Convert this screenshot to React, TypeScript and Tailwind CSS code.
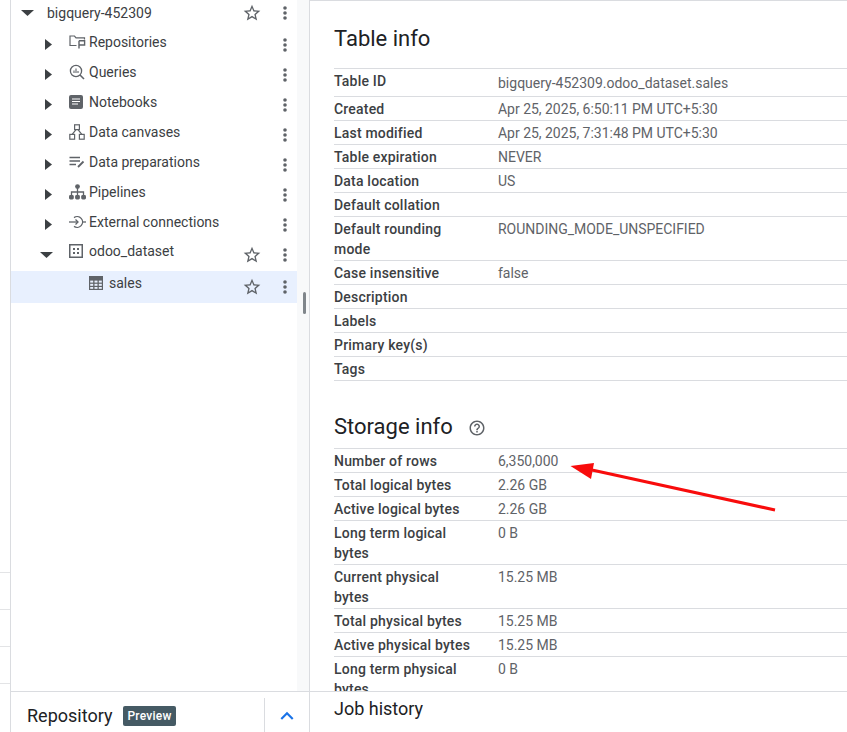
import React from "react";
import { MdStarBorder, MdOutlineHelpOutline, MdKeyboardArrowUp } from "react-icons/md";

const ink = "#5f6368";

const Star = () => <MdStarBorder size={20} color={ink} />;
const Kebab = () => (
  <svg width="4" height="14" viewBox="0 0 4 14" fill={ink}>
    <circle cx="2" cy="2" r="1.8" />
    <circle cx="2" cy="7" r="1.8" />
    <circle cx="2" cy="12" r="1.8" />
  </svg>
);
const CaretRight = () => (
  <svg width="7" height="11" viewBox="0 0 7 11" fill="#3c4043"><path d="M0 0 L7 5.5 L0 11 Z" /></svg>
);
const CaretDown = () => (
  <svg width="13" height="6" viewBox="0 0 13 6" fill="#3c4043"><path d="M0 0 H13 L6.5 6 Z" /></svg>
);

const RepoIcon = () => (
  <svg width="17" height="14" viewBox="0 0 17 14" fill="none" stroke={ink} strokeWidth="1.2">
    <path d="M7.5 10.5 H1 V1 H5.5 L7 2.8 H15.5 V4.5" />
    <path d="M10 5.8 V13.5 M10 5.8 H15.6 V10 H10" strokeWidth="1.4" />
  </svg>
);
const QueryIcon = () => (
  <svg width="16" height="16" viewBox="0 0 16 16" fill="none" stroke={ink} strokeWidth="1.3">
    <circle cx="7" cy="7" r="5.6" />
    <path d="M11 11 L15 15" strokeWidth="1.6" />
    <path d="M5 6.5 V9 M7 4.5 V9 M9 7 V9" strokeWidth="1.1" />
  </svg>
);
const NotebookIcon = () => (
  <svg width="14" height="14" viewBox="0 0 14 14">
    <rect width="14" height="14" rx="2" fill={ink} />
    <path d="M3 4 H11 M3 6.5 H11 M3 9 H9" stroke="#fff" strokeWidth="1.1" />
  </svg>
);
const CanvasIcon = () => (
  <svg width="16" height="16" viewBox="0 0 16 16" fill="none" stroke={ink} strokeWidth="1.2">
    <rect x="5.6" y="0.8" width="4.8" height="4.8" />
    <rect x="0.8" y="10.4" width="4.8" height="4.8" />
    <rect x="10.4" y="10.4" width="4.8" height="4.8" />
    <path d="M7 5.6 L3.2 10.4 M9 5.6 L12.8 10.4" />
  </svg>
);
const PrepIcon = () => (
  <svg width="16" height="12" viewBox="0 0 16 12" fill="none" stroke={ink} strokeWidth="1.3">
    <path d="M0.5 1.5 H11 M0.5 5 H11 M0.5 8.5 H7" />
    <path d="M9 11 L14.5 5.5" strokeWidth="1.8" />
  </svg>
);
const PipelineIcon = () => (
  <svg width="17" height="16" viewBox="0 0 17 16" fill={ink}>
    <circle cx="8.5" cy="2.6" r="2.4" />
    <path d="M8.5 4 V11 M2.5 11 V8 H14.5 V11" fill="none" stroke={ink} strokeWidth="1.3" />
    <rect x="0" y="11" width="4.8" height="4.4" rx="1.4" />
    <rect x="6.1" y="11" width="4.8" height="4.4" rx="1.4" />
    <rect x="12.2" y="11" width="4.8" height="4.4" rx="1.4" />
  </svg>
);
const ExternalIcon = () => (
  <svg width="17" height="14" viewBox="0 0 17 14" fill="none" stroke={ink} strokeWidth="1.3">
    <path d="M0 7 H9" />
    <path d="M6.5 4.5 L9 7 L6.5 9.5" />
    <path d="M5 2.6 A5.4 5.4 0 1 1 5 11.4" />
    <path d="M13.5 7 H17" />
  </svg>
);
const DatasetIcon = () => (
  <svg width="14" height="14" viewBox="0 0 14 14" fill="none" stroke={ink} strokeWidth="1.5">
    <rect x="0.75" y="0.75" width="12.5" height="12.5" />
    <g fill={ink} stroke="none">
      <rect x="4" y="4" width="2" height="2" />
      <rect x="8" y="4" width="2" height="2" />
      <rect x="4" y="8" width="2" height="2" />
      <rect x="8" y="8" width="2" height="2" />
    </g>
  </svg>
);
const TableIcon = () => (
  <svg width="14" height="14" viewBox="0 0 14 14">
    <rect width="14" height="14" fill={ink} />
    <g fill="#e8f0fe">
      <rect x="1.2" y="4.6" width="3" height="2" />
      <rect x="5.5" y="4.6" width="3" height="2" />
      <rect x="9.8" y="4.6" width="3" height="2" />
      <rect x="1.2" y="7.8" width="3" height="2" />
      <rect x="5.5" y="7.8" width="3" height="2" />
      <rect x="9.8" y="7.8" width="3" height="2" />
      <rect x="1.2" y="11" width="3" height="1.8" />
      <rect x="5.5" y="11" width="3" height="1.8" />
      <rect x="9.8" y="11" width="3" height="1.8" />
    </g>
  </svg>
);

const sections: [string, React.ReactNode][] = [
  ["Repositories", <RepoIcon />],
  ["Queries", <QueryIcon />],
  ["Notebooks", <NotebookIcon />],
  ["Data canvases", <CanvasIcon />],
  ["Data preparations", <PrepIcon />],
  ["Pipelines", <PipelineIcon />],
  ["External connections", <ExternalIcon />],
];

const tableInfo: [string, string][] = [
  ["Created", "Apr 25, 2025, 6:50:11 PM UTC+5:30"],
  ["Last modified", "Apr 25, 2025, 7:31:48 PM UTC+5:30"],
  ["Table expiration", "NEVER"],
  ["Data location", "US"],
  ["Default collation", ""],
  ["Default rounding mode", "ROUNDING_MODE_UNSPECIFIED"],
  ["Case insensitive", "false"],
  ["Description", ""],
  ["Labels", ""],
  ["Primary key(s)", ""],
  ["Tags", ""],
];

const storageInfo: [string, string][] = [
  ["Number of rows", "6,350,000"],
  ["Total logical bytes", "2.26 GB"],
  ["Active logical bytes", "2.26 GB"],
  ["Long term logical bytes", "0 B"],
  ["Current physical bytes", "15.25 MB"],
  ["Total physical bytes", "15.25 MB"],
  ["Active physical bytes", "15.25 MB"],
  ["Long term physical bytes", "0 B"],
];

function InfoRow({ label, value }: { label: string; value: string }) {
  return (
    <div className="flex border-b border-[#dadce0] pb-[1px] pt-[2px] leading-[20px]">
      <div className="w-[164px] shrink-0 pr-[24px] text-[14px] font-medium tracking-[0.2px] text-[#3c4043]">{label}</div>
      <div className="text-[14px] tracking-[-0.02px] text-[#5f6368]">{value}</div>
    </div>
  );
}

export default function App() {
  return (
    <div
      className="relative flex h-[732px] w-[847px] overflow-hidden bg-white text-[#3c4043]"
      style={{ fontFamily: "Roboto, sans-serif" }}
    >
      {/* page sliver */}
      <div className="w-[11px] shrink-0 border-r border-[#dadce0] pt-[572px]">
        <div className="h-[37px] border-t border-[#e3e4e6]" />
        <div className="h-[37px] border-t border-[#e3e4e6]" />
        <div className="h-[37px] border-t border-[#e3e4e6]" />
        <div className="h-[37px] border-t border-[#e3e4e6]" />
      </div>

      {/* explorer */}
      <div className="flex w-[299px] shrink-0 flex-col border-r border-[#dadce0]">
        <div className="flex min-h-0 flex-1">
          <div className="w-[286px] shrink-0 text-[14px]">
            <div className="mb-[4px] flex h-[26px] items-center">
              <div className="flex w-[36px] justify-start pl-[10px]"><CaretDown /></div>
              <span className="flex-1 text-[#3c4043]">bigquery-452309</span>
              <div className="flex w-[22px] justify-center"><Star /></div>
              <div className="ml-[20px] mr-[10px] flex w-[4px] justify-center"><Kebab /></div>
            </div>
            {sections.map(([name, icon]) => (
              <div key={name} className="flex h-[30px] items-center">
                <div className="mb-[1px] flex w-[58px] shrink-0 justify-center pl-[16px]">
                  <CaretRight />
                </div>
                <div className="mb-[6px] flex w-[20px] shrink-0 justify-start">{icon}</div>
                <span className="mb-[6px] flex-1">{name}</span>
                <div className="ml-[12px] mr-[10px] flex w-[4px] justify-center"><Kebab /></div>
              </div>
            ))}
            <div className="flex h-[30px] items-center">
              <div className="flex w-[58px] shrink-0 justify-center pl-[13px]">
                <CaretDown />
              </div>
              <div className="mb-[8px] flex w-[20px] shrink-0 justify-start"><DatasetIcon /></div>
              <span className="mb-[8px] flex-1">odoo_dataset</span>
              <div className="flex w-[22px] justify-center"><Star /></div>
              <div className="ml-[20px] mr-[10px] flex w-[4px] justify-center"><Kebab /></div>
            </div>
            <div className="mt-[1px] flex h-[32px] items-center bg-[#e8f0fe]">
              <div className="mb-[8px] ml-[78px] flex w-[20px] shrink-0 justify-start"><TableIcon /></div>
              <span className="mb-[8px] flex-1">sales</span>
              <div className="flex w-[22px] justify-center"><Star /></div>
              <div className="ml-[20px] mr-[10px] flex w-[4px] justify-center"><Kebab /></div>
            </div>
          </div>
          <div className="flex-1 bg-[#f8f9fa]" />
        </div>
        <div className="flex h-[41px] shrink-0 items-center border-t border-[#dadce0] bg-white">
          <span className="ml-[16px] mt-[6px] text-[18px] text-[#202124]">Repository</span>
          <span className="ml-[11px] mt-[7px] rounded-[2px] bg-[#455a64] px-[4px] text-[12px] font-medium leading-[20px] tracking-[0.25px] text-white">Preview</span>
          <div className="ml-auto flex h-[34px] w-[45px] items-center justify-center self-end border-l border-[#dadce0]">
            <MdKeyboardArrowUp size={26} color="#1a73e8" className="mt-[2px]" />
          </div>
        </div>
      </div>

      {/* details */}
      <div className="flex min-w-0 flex-1 flex-col border-t border-[#dadce0]">
        <div className="min-h-0 flex-1 overflow-hidden pl-[24px]">
          <h2 className="mt-[22px] text-[22px] font-normal leading-[32px] text-[#202124]">Table info</h2>
          <div className="mt-[13px] border-t border-[#dadce0]">
            <div className="flex h-[28px] border-b border-[#dadce0]">
              <div className="w-[164px] shrink-0 pt-[2px] text-[14px] font-medium leading-[20px] tracking-[0.2px] text-[#3c4043]">Table ID</div>
              <div className="pt-[4px] text-[14px] leading-[20px] text-[#5f6368]">bigquery-452309.odoo_dataset.sales</div>
            </div>
            {tableInfo.map(([l, v]) => <InfoRow key={l} label={l} value={v} />)}
          </div>
          <div className="mt-[30px] flex items-center gap-[15px]">
            <h2 className="text-[22px] font-normal leading-[32px] text-[#202124]">Storage info</h2>
            <MdOutlineHelpOutline size={18} color={ink} className="mt-[2px]" />
          </div>
          <div className="mt-[5px] border-t border-[#dadce0]">
            {storageInfo.map(([l, v]) => <InfoRow key={l} label={l} value={v} />)}
          </div>
        </div>
        <div className="flex h-[41px] shrink-0 items-center border-t border-[#dadce0] bg-white pl-[24px]">
          <span className="mb-[7px] text-[18px] text-[#202124]">Job history</span>
        </div>
      </div>

      {/* scrollbar thumb */}
      <div className="absolute left-[303px] top-[292px] h-[22px] w-[3px] rounded-full bg-[#80868b]" />

      {/* annotation arrow */}
      <svg className="absolute left-0 top-0" width="847" height="732" viewBox="0 0 847 732">
        <path d="M775 510 L592 470" stroke="#f80c0c" strokeWidth="3" fill="none" />
        <path d="M570.5 466 L594 463 L591 479 Z" fill="#f80c0c" />
      </svg>
    </div>
  );
}
